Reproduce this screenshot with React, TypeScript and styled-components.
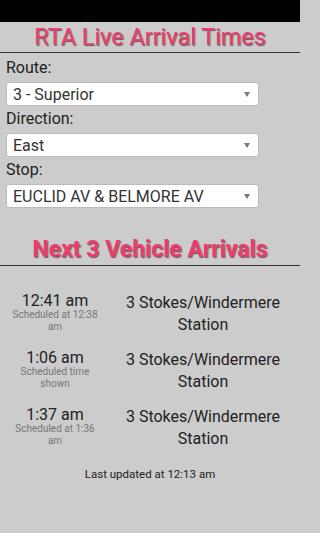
import React from 'react';
import styled, { createGlobalStyle } from 'styled-components';

interface Arrival {
	time: string;
	scheduled: string;
	destination: string;
}

const arrivals: Arrival[] = [
	{ time: '12:41 am', scheduled: 'Scheduled at 12:38 am', destination: '3 Stokes/Windermere Station' },
	{ time: '1:06 am', scheduled: 'Scheduled time shown', destination: '3 Stokes/Windermere Station' },
	{ time: '1:37 am', scheduled: 'Scheduled at 1:36 am', destination: '3 Stokes/Windermere Station' },
];

const GlobalStyle = createGlobalStyle`
	html, body {
		margin: 0;
		padding: 0;
		background: #cccccc;
		font-family: Roboto, "Liberation Sans", sans-serif;
		overflow: hidden;
	}
`;

const Screen = styled.div`
	width: 300px;
	height: 533px;
	background: #cccccc;
	display: flex;
	flex-direction: column;
	overflow: hidden;
`;

const StatusBar = styled.div`
	height: 22px;
	flex-shrink: 0;
	background: #000;
`;

const Heading = styled.h1<{ $bold?: boolean }>`
	margin: 0;
	text-align: center;
	color: #ec3b70;
	font-size: ${ ( p ) => ( p.$bold ? '23px' : '23.4px' ) };
	font-weight: ${ ( p ) => ( p.$bold ? 700 : 400 ) };
	line-height: 30px;
	text-shadow: 1px 1px 1px rgba( 0, 0, 0, 0.55 );
	border-bottom: 1px solid #333;
`;

const Form = styled.div`
	display: flex;
	flex-direction: column;
	padding: 5px 6px 0 6px;
`;

const Label = styled.div`
	font-size: 16px;
	color: #222;
	line-height: 20px;
	margin-bottom: 4px;
`;

const Select = styled.div`
	width: 253px;
	height: 24px;
	box-sizing: border-box;
	background: #fff;
	border: 1px solid #bbb;
	border-radius: 3px;
	display: flex;
	align-items: center;
	justify-content: space-between;
	padding: 0 8px 0 6px;
	font-size: 16px;
	color: #333;
	margin-bottom: 3px;
`;

const Caret = styled.span`
	width: 0;
	height: 0;
	border-left: 3.5px solid transparent;
	border-right: 3.5px solid transparent;
	border-top: 5px solid #777;
`;

const Section = styled.div`
	margin-top: 24px;
`;

const List = styled.div`
	display: flex;
	flex-direction: column;
	gap: 13px;
	padding-top: 26px;
`;

const Row = styled.div`
	display: grid;
	grid-template-columns: 110px 1fr;
	align-items: center;
	height: 44px;
`;

const TimeCell = styled.div`
	text-align: center;
	padding: 0 10px;
	margin-top: -3px;
`;

const Time = styled.div`
	font-size: 16px;
	color: #222;
	line-height: 17px;
`;

const Scheduled = styled.div`
	font-size: 10px;
	color: #777;
	line-height: 12.5px;
`;

const Destination = styled.div`
	text-align: center;
	font-size: 16px;
	color: #222;
	line-height: 22px;
	padding: 0 4px 0 0;
`;

const Updated = styled.div`
	text-align: center;
	font-size: 11.5px;
	line-height: 14px;
	color: #222;
	margin-top: 17px;
`;

export default function App() {
	return (
		<Screen>
			<GlobalStyle />
			<StatusBar />
			<Heading>RTA Live Arrival Times</Heading>
			<Form>
				<Label>Route:</Label>
				<Select>
					3 - Superior
					<Caret />
				</Select>
				<Label>Direction:</Label>
				<Select>
					East
					<Caret />
				</Select>
				<Label>Stop:</Label>
				<Select>
					EUCLID AV &amp; BELMORE AV
					<Caret />
				</Select>
			</Form>
			<Section>
				<Heading $bold>Next 3 Vehicle Arrivals</Heading>
			</Section>
			<List>
				{ arrivals.map( ( a, i ) => (
					<Row key={ i }>
						<TimeCell>
							<Time>{ a.time }</Time>
							<Scheduled>{ a.scheduled }</Scheduled>
						</TimeCell>
						<Destination>{ a.destination }</Destination>
					</Row>
				) ) }
			</List>
			<Updated>Last updated at 12:13 am</Updated>
		</Screen>
	);
}
